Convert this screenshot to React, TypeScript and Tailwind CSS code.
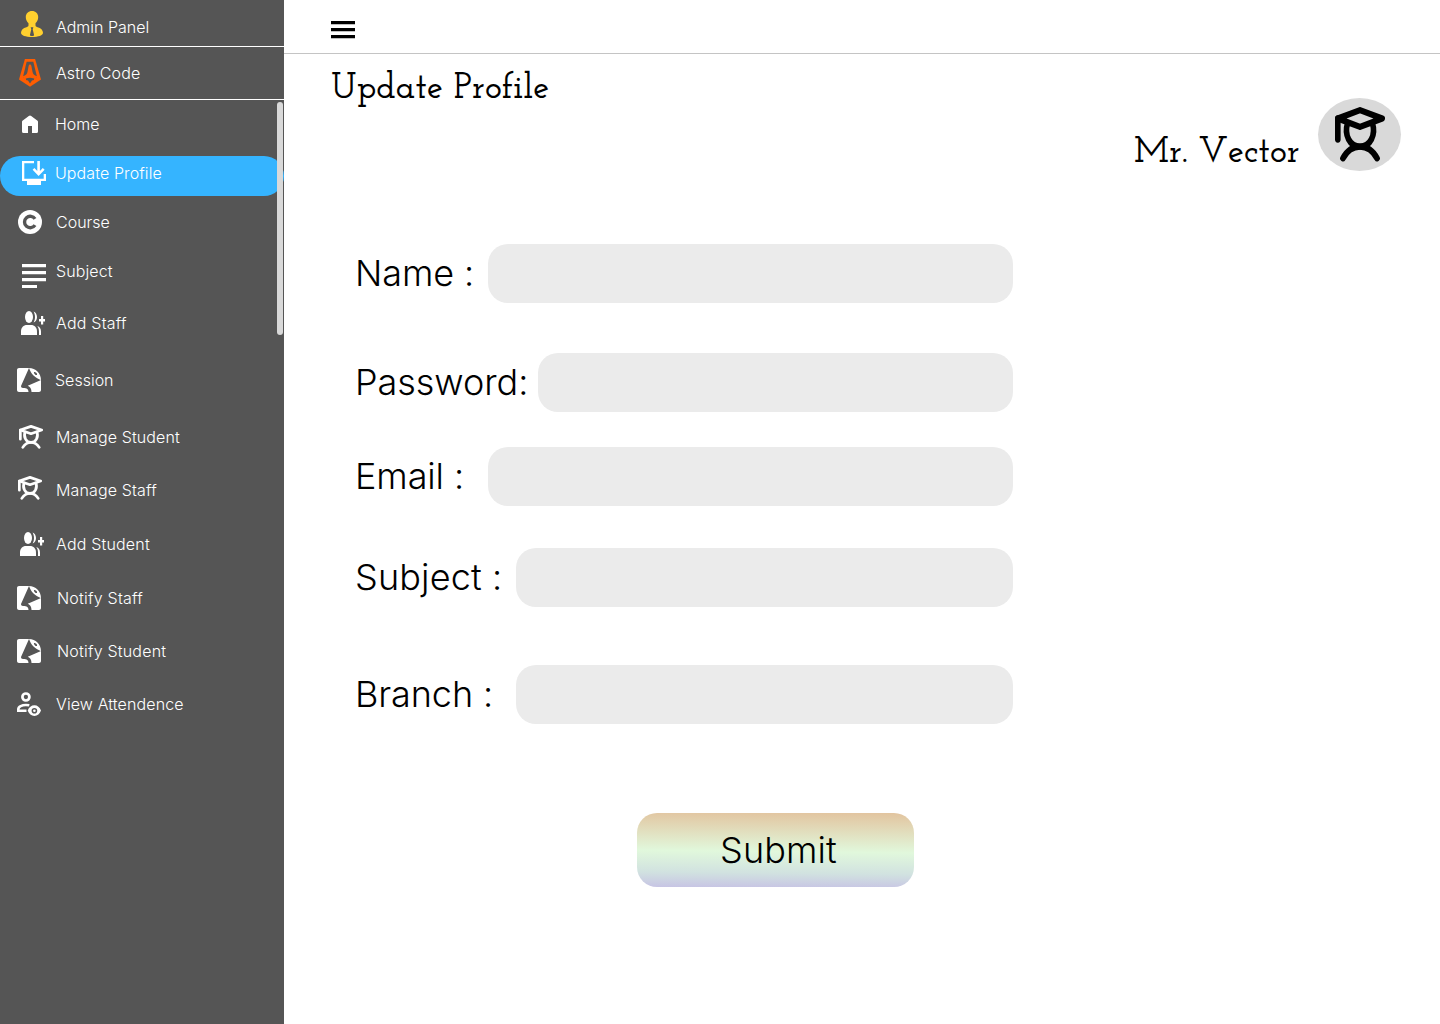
import type { ReactNode } from "react";
import { SiSessionize } from "react-icons/si";

function AdminIcon() {
  return (
    <svg width="24" height="28" viewBox="0 0 24 28" fill="#ffd02f">
      <path d="M12 1c3.600 0 6.200 2.500 6.200 6.200 0 2.300-1.100 4.600-2.700 6.100v2c0 1 .7 1.600 2 1.900 3.400.9 5.500 2.700 5.500 5.600C23 25.600 18.500 27 12 27S1 25.600 1 22.800c0-2.900 2.100-4.700 5.500-5.600 1.300-.3 2-.9 2-1.900v-2C6.900 11.800 5.800 9.500 5.800 7.200 5.800 3.500 8.400 1 12 1z" />
      <path fill="#555" d="M10.600 17.200h2.800l-.7 2 1.400 6-.9.800h-2.400l-.9-.8 1.400-6z" />
    </svg>
  );
}

function AstroIcon() {
  return (
    <svg width="24" height="28" viewBox="0 0 24 28">
      <path fill="#ff5d01" d="M6.900 0h10.200L23 20.500 12 27.800 1 20.500z" />
      <path fill="#555" d="M8.700 2.800h6.600l3.700 15-2 2.300H7l-2-2.300z" />
      <path fill="#555" d="M8 18.500h8v2.600l-2 .5L12 24.400l-2-2.800-2-.5z" />
      <path fill="#ff5d01" d="M12 5.500c.9 0 1.200.6 1.400 1.600l1.100 5.600c.4 2.100 1.400 3.500 4.700 4.600l-1.900 4-1.300-1.800c-1.300-.5-2.600-.7-4-.7s-2.700.2-4 .7l-1.300 1.800-1.900-4c3.300-1.100 4.300-2.500 4.700-4.600l1.100-5.600c.2-1 .5-1.600 1.400-1.600z" />
    </svg>
  );
}

function HomeIcon() {
  return (
    <svg width="24" height="24" viewBox="0 0 24 24" fill="currentColor">
      <path d="M4 19v-9q0-.475.213-.9t.587-.7l6-4.500q.525-.4 1.200-.4t1.200.4l6 4.500q.375.275.588.7T20 10v9.500q0 1.500-1.500 1.500H14v-7h-4v7H5.500Q4 21 4 19.500z" />
    </svg>
  );
}

function BrowserUpdateIcon() {
  return (
    <svg width="24" height="24" viewBox="0 0 24 24" fill="currentColor">
      <path d="M0 0h12v2.300H2.300v15.400h19.400V13H24v7h-5v4H5v-4H0z" />
      <path d="M15.300 0h2.600v9.900l2.900-2.900 1.800 1.800-6 6.200-6-6.200L12.400 7l2.900 2.900z" />
    </svg>
  );
}

function CourseIcon() {
  return (
    <svg width="24" height="24" viewBox="0 0 24 24">
      <circle cx="12" cy="12" r="12" fill="currentColor" />
      <path d="M17 8.900A5.700 5.700 0 1 0 17 15.100" fill="none" stroke="#555" strokeWidth="3.400" />
    </svg>
  );
}

function SubjectIcon() {
  return (
    <svg width="24" height="24" viewBox="0 0 24 24" fill="currentColor">
      <path d="M0 0h24v3.300H0zM0 7h24v3.300H0zM0 14h24v3.300H0zM0 21h15v3H0z" />
    </svg>
  );
}

function AddUserIcon() {
  return (
    <svg width="24" height="24" viewBox="0 0 24 24" fill="currentColor">
      <ellipse cx="8" cy="6" rx="4" ry="6" />
      <path d="M0 24v-3.500C0 16.500 2.500 14 6 14h4c3.500 0 6 2.500 6 6.500V24z" />
      <path d="M12.600.4c2 .6 3.400 2.900 3.400 5.600s-1.400 5-3.400 5.600C13.500 10 14 8 14 6s-.5-4-1.400-5.600zM16.300 15c2.400.7 3.700 2.700 3.700 5.500V24h-2v-3.500c0-2-.6-4-1.700-5.500z" />
      <path d="M20 5h2.200v3H24v2.500h-1.800v3H20v-3h-2V8h2z" />
    </svg>
  );
}

function GraduateIcon({ width = 24, height = 24 }: { width?: number; height?: number }) {
  return (
    <svg width={width} height={height} viewBox="0 0 24 24" preserveAspectRatio="none" fill="none" stroke="currentColor" strokeWidth="2.700" strokeLinecap="round" strokeLinejoin="round">
      <path d="M1.350 5 12 1.350 22.650 5 12 8.700z" />
      <path d="M1.350 5v9.200M6.100 6.900C4.200 12.300 7.200 17.300 12 17.300s7.800-5 5.900-10.400" />
      <path d="M3.800 22.400C5.700 19.200 8.400 17.300 12 17.300s6.300 1.900 8.200 5.100" />
    </svg>
  );
}

function AttendanceIcon() {
  return (
    <svg width="24" height="24" viewBox="0 0 24 24" fill="none" stroke="currentColor">
      <circle cx="8.900" cy="5" r="3.500" strokeWidth="2.700" />
      <path d="M9.500 18.700H1.300v-1.500c0-2.800 3.800-4.200 7.600-4.200 1.300 0 2.400.1 3.400.3" strokeWidth="2.600" />
      <path fill="currentColor" stroke="none" fillRule="evenodd" d="M17.400 13.300c3 0 5.400 1.900 6.600 5.300-1.200 3.500-3.600 5.400-6.600 5.400s-5.500-1.900-6.700-5.400c1.200-3.400 3.700-5.300 6.700-5.300zm0 2.600a2.800 2.800 0 1 0 0 5.600 2.800 2.800 0 0 0 0-5.600z" />
      <circle cx="17.400" cy="18.700" r="1.300" fill="currentColor" stroke="none" />
    </svg>
  );
}

interface NavItem {
  label: string;
  icon: ReactNode;
  row: string;
  iconBox: string;
  tracking?: string;
}

const session = <SiSessionize size={24} />;

const items: NavItem[] = [
  { label: "Home", icon: <HomeIcon />, row: "mt-3 h-6", iconBox: "w-[55px] pl-[18px]" },
  { label: "Update Profile", icon: <BrowserUpdateIcon />, row: "mt-5 h-10 rounded-[20px] bg-[#35b4ff] pt-[5px]", iconBox: "w-[55px] pl-[22px]", tracking: "tracking-[0.1px]" },
  { label: "Course", icon: <CourseIcon />, row: "mt-3.5 h-6", iconBox: "w-14 pl-[18px]" },
  { label: "Subject", icon: <SubjectIcon />, row: "mt-[25px] h-6", iconBox: "w-14 pl-[22px] pt-[5px]", tracking: "tracking-[0.1px]" },
  { label: "Add Staff", icon: <AddUserIcon />, row: "mt-7 h-6", iconBox: "w-14 pl-[21px]", tracking: "tracking-[0.22px]" },
  { label: "Session", icon: session, row: "mt-[33px] h-6", iconBox: "w-[55px] pl-[17px]" },
  { label: "Manage Student", icon: <GraduateIcon />, row: "mt-[33px] h-6", iconBox: "w-14 pl-[19px]", tracking: "tracking-[0.12px]" },
  { label: "Manage Staff", icon: <GraduateIcon />, row: "mt-[29px] h-6", iconBox: "w-14 pl-[18px] -mt-0.5", tracking: "tracking-[0.14px]" },
  { label: "Add Student", icon: <AddUserIcon />, row: "mt-[30px] h-6", iconBox: "w-14 pl-5", tracking: "tracking-[0.18px]" },
  { label: "Notify Staff", icon: session, row: "mt-[30px] h-6", iconBox: "w-[57px] pl-[17px]", tracking: "tracking-[0.22px]" },
  { label: "Notify Student", icon: session, row: "mt-[29px] h-6", iconBox: "w-[57px] pl-[17px]", tracking: "tracking-[0.2px]" },
  { label: "View Attendence", icon: <AttendanceIcon />, row: "mt-[29px] h-6", iconBox: "w-14 pl-[17px]", tracking: "tracking-[0.12px]" },
];

const fields = [
  { label: "Name :", row: "", labelBox: "w-[133px] tracking-[-0.1px]" },
  { label: "Password:", row: "mt-[50px]", labelBox: "w-[183px] tracking-[-0.05px]" },
  { label: "Email :", row: "mt-[35px]", labelBox: "w-[133px] tracking-[-0.1px]" },
  { label: "Subject :", row: "mt-[42px]", labelBox: "w-[161px] tracking-[0.15px]" },
  { label: "Branch :", row: "mt-[58px]", labelBox: "w-[161px] tracking-[-0.1px]" },
];

function Sidebar() {
  return (
    <aside className="relative h-full w-[284px] shrink-0 bg-[#555555] text-base leading-6 font-light text-white">
      <div className="flex h-[47px] border-b border-white pt-[10px]">
        <span className="w-14 shrink-0 pl-5"><AdminIcon /></span>
        <span className="pt-[5px]">Admin Panel</span>
      </div>
      <div className="flex h-[53px] border-b border-white pt-3">
        <span className="w-14 shrink-0 pl-[18px]"><AstroIcon /></span>
        <span className="pt-0.5 tracking-[0.1px]">Astro Code</span>
      </div>
      <nav className="flex flex-col">
        {items.map((item) => (
          <a key={item.label} className={`flex items-start ${item.row}`}>
            <span className={`shrink-0 ${item.iconBox}`}>{item.icon}</span>
            <span className={item.tracking}>{item.label}</span>
          </a>
        ))}
      </nav>
      <div className="absolute top-[102px] right-px h-[233px] w-1.5 rounded-full bg-[#d9d9d9]" />
    </aside>
  );
}

export default function App() {
  return (
    <div className="flex h-[1024px] w-[1440px] overflow-hidden bg-white font-['Inter',sans-serif] text-black">
      <Sidebar />
      <main className="flex min-w-0 flex-1 flex-col">
        <header className="h-[54px] border-b border-[#c4c4c4] pt-[21px] pl-[47px]">
          <svg width="24" height="18" viewBox="0 0 24 18" fill="currentColor">
            <path d="M0 0h24v3.300H0zM0 7h24v3.300H0zM0 14h24v3.300H0z" />
          </svg>
        </header>
        <div className="flex h-[190px] justify-between pl-[47px] font-['Josefin_Slab','Liberation_Serif',serif] font-semibold [font-kerning:none]">
          <h1 className="pt-[15px] text-[36px] leading-[40px] whitespace-nowrap">Update Profile</h1>
          <div className="flex pt-11 pr-[39px]">
            <p className="w-[184px] pt-[35px] text-[36px] leading-[40px] whitespace-nowrap">Mr. Vector</p>
            <div className="flex h-[73px] w-[83px] justify-center rounded-[50%] bg-[#d9d9d9] pt-[9px] pl-px">
              <GraduateIcon width={50} height={55} />
            </div>
          </div>
        </div>
        <form className="flex w-[729px] flex-col pl-[71px]">
          {fields.map((f) => (
            <label key={f.label} className={`flex h-[59px] items-center text-4xl font-light ${f.row}`}>
              <span className={`shrink-0 pb-0.5 whitespace-nowrap ${f.labelBox}`}>{f.label}</span>
              <input className="h-full min-w-0 flex-1 rounded-[20px] bg-[#ebebeb] px-5 outline-none" />
            </label>
          ))}
          <button
            type="button"
            className="mt-[89px] ml-[282px] h-[74px] w-[277px] rounded-[20px] bg-[linear-gradient(180.6deg,#e2c49f_0%,#e1f8dc_52%,#d1e2e0_80%,#c7c4e4_100%)] pl-1.5 text-4xl font-light tracking-[0.1px]"
          >
            Submit
          </button>
        </form>
      </main>
    </div>
  );
}
